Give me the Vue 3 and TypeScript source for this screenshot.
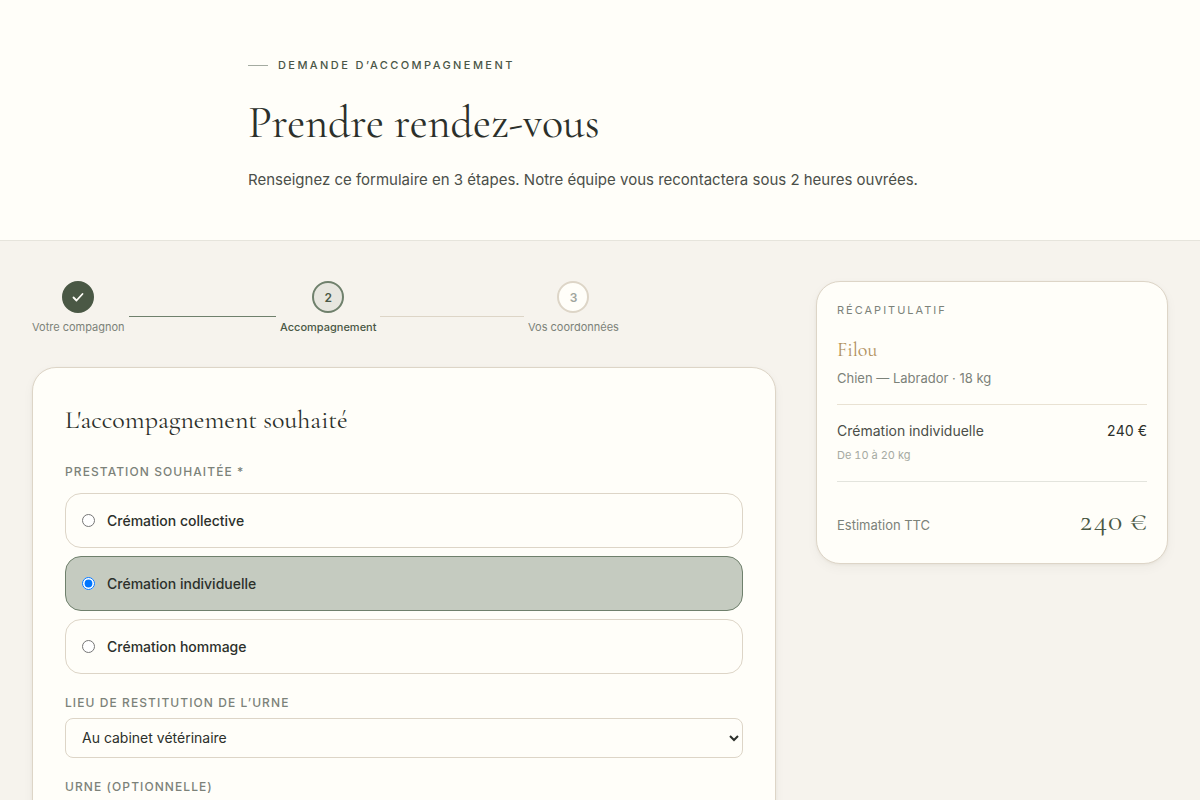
<script setup lang="ts">
import { ref, computed } from 'vue'

interface Step { id: number; label: string }
interface Service { id: string; label: string; price: number }

const steps: Step[] = [
  { id: 1, label: 'Votre compagnon' },
  { id: 2, label: 'Accompagnement' },
  { id: 3, label: 'Vos coordonnées' },
]
const currentStep = ref(2)

const services: Service[] = [
  { id: 'collective', label: 'Crémation collective', price: 120 },
  { id: 'individuelle', label: 'Crémation individuelle', price: 240 },
  { id: 'hommage', label: 'Crémation hommage', price: 340 },
]
const selected = ref('individuelle')
const service = computed(() => services.find((s) => s.id === selected.value) ?? services[1])

const place = ref('cabinet')
const urn = ref('')

function stepState(id: number): string {
  if (id < currentStep.value) return 'done'
  return id === currentStep.value ? 'active' : 'todo'
}
</script>

<template>
  <div class="page">
    <header class="hero">
      <div class="hero-inner">
        <p class="eyebrow">Demande d’accompagnement</p>
        <h1>Prendre rendez-vous</h1>
        <p class="lead">Renseignez ce formulaire en 3 étapes. Notre équipe vous recontactera sous 2 heures ouvrées.</p>
      </div>
    </header>

    <main class="layout">
      <div class="main-col">
        <ol class="steps">
          <li v-for="s in steps" :key="s.id" :class="['step-item', stepState(s.id)]">
            <div class="step">
              <span class="dot">
                <svg v-if="s.id < currentStep" width="14" height="14" viewBox="0 0 14 14" fill="none" aria-hidden="true">
                  <path d="M2.5 7.5L5.5 10.5L11.5 4" stroke="currentColor" stroke-width="1.8" stroke-linecap="round" stroke-linejoin="round" />
                </svg>
                <template v-else>{{ s.id }}</template>
              </span>
              <span class="step-label">{{ s.label }}</span>
            </div>
            <span v-if="s.id < steps.length" class="line"></span>
          </li>
        </ol>

        <form class="card" @submit.prevent>
          <h2>L'accompagnement souhaité</h2>

          <fieldset class="field">
            <legend class="label">Prestation souhaitée *</legend>
            <div class="options">
              <label v-for="s in services" :key="s.id" :class="['option', { checked: selected === s.id }]">
                <input v-model="selected" type="radio" name="service" :value="s.id" />
                <span>{{ s.label }}</span>
              </label>
            </div>
          </fieldset>

          <div class="field">
            <label class="label" for="place">Lieu de restitution de l’urne</label>
            <select id="place" v-model="place">
              <option value="cabinet">Au cabinet vétérinaire</option>
              <option value="domicile">À domicile</option>
            </select>
          </div>

          <div class="field">
            <label class="label" for="urn">Urne (optionnelle)</label>
            <select id="urn" v-model="urn">
              <option value="">Sans urne</option>
            </select>
          </div>
        </form>
      </div>

      <aside class="summary">
        <p class="summary-title">Récapitulatif</p>
        <p class="pet-name">Filou</p>
        <p class="pet-info">Chien — Labrador · 18 kg</p>
        <div class="block">
          <div class="row">
            <span>{{ service.label }}</span>
            <span class="price">{{ service.price }} €</span>
          </div>
          <p class="note">De 10 à 20 kg</p>
        </div>
        <div class="total">
          <span>Estimation TTC</span>
          <strong>{{ service.price }} €</strong>
        </div>
      </aside>
    </main>
  </div>
</template>

<style>
body {
  margin: 0;
  background: #f6f3ed;
}
</style>

<style scoped>
.page {
  min-height: 100vh;
  background: #f6f3ed;
  color: #2c302b;
  font-family: Inter, "Liberation Sans", sans-serif;
}
.page * {
  box-sizing: border-box;
}
h1, h2, p, ol {
  margin: 0;
  padding: 0;
}
h1, h2, .pet-name, .total strong {
  font-family: "Cormorant Garamond", Cormorant, "EB Garamond", "Liberation Serif", serif;
  font-weight: 400;
}
.hero {
  background: #fffef9;
  border-bottom: 1px solid #e6e4dc;
  padding: 56px 0 48px;
}
.hero-inner {
  max-width: 768px;
  margin: 0 auto;
  padding: 0 32px;
}
.eyebrow {
  display: flex;
  align-items: center;
  gap: 10px;
  font-size: 11px;
  line-height: 18px;
  font-weight: 500;
  letter-spacing: 0.22em;
  text-transform: uppercase;
  color: #4a5647;
}
.eyebrow::before {
  content: "";
  width: 20px;
  height: 1px;
  background: #a4aba1;
}
h1 {
  margin-top: 20px;
  font-size: 44px;
  line-height: 58px;
}
.lead {
  margin-top: 16px;
  font-size: 15px;
  line-height: 24px;
  color: #4b4f49;
}
.layout {
  display: grid;
  grid-template-columns: minmax(0, 1fr) 352px;
  gap: 40px;
  align-items: start;
  max-width: 1200px;
  margin: 0 auto;
  padding: 40px 32px;
  box-sizing: border-box;
}
.steps {
  display: flex;
  list-style: none;
  margin-bottom: 32px;
}
.step-item {
  flex: 1;
  display: flex;
  align-items: center;
}
.step {
  display: flex;
  flex-direction: column;
  align-items: center;
  gap: 6px;
}
.dot {
  display: flex;
  align-items: center;
  justify-content: center;
  width: 32px;
  height: 32px;
  border: 2px solid #ddd5c7;
  border-radius: 50%;
  background: #fffef9;
  color: #a0a59d;
  font-size: 12px;
  font-weight: 600;
}
.done .dot {
  background: #4a5845;
  border-color: #4a5845;
  color: #fffef9;
}
.active .dot {
  background: #e7e6df;
  border-color: #6f806c;
  color: #4a5845;
}
.step-label {
  font-size: 11px;
  line-height: 16px;
  color: #7c8279;
  white-space: nowrap;
}
.active .step-label {
  font-weight: 500;
  color: #4a5845;
}
.line {
  flex: 1;
  height: 1px;
  margin: 16px 4px 0;
  background: #ddd5c7;
}
.done .line {
  background: #6f806c;
}
.card, .summary {
  background: #fffef9;
  border: 1px solid #ddd5c7;
  border-radius: 24px;
  box-shadow: 0 1px 3px rgba(60, 50, 30, 0.06), 0 4px 12px rgba(60, 50, 30, 0.04);
}
.card {
  padding: 32px;
}
h2 {
  font-size: 26px;
  line-height: 40px;
  margin-bottom: 23px;
}
.field {
  border: 0;
  margin: 0 0 20px;
  padding: 0;
  min-width: 0;
}
.label {
  display: block;
  padding: 0;
  margin-bottom: 6px;
  font-size: 12px;
  line-height: 18px;
  font-weight: 500;
  letter-spacing: 0.09em;
  text-transform: uppercase;
  color: #7c8279;
}
legend.label {
  margin-bottom: 12px;
}
.options {
  display: grid;
  gap: 8px;
}
.option {
  display: flex;
  align-items: center;
  gap: 12px;
  padding: 16px;
  border: 1px solid #ddd5c7;
  border-radius: 16px;
  font-size: 14px;
  line-height: 21px;
  font-weight: 500;
  cursor: pointer;
}
.option.checked {
  background: #c5cbc0;
  border-color: #6f806c;
}
.option input {
  width: 13px;
  height: 13px;
  margin: 0;
}
select {
  display: block;
  width: 100%;
  height: 40px;
  padding: 0 12px 2px;
  border: 1px solid #ddd5c7;
  border-radius: 8px;
  background: #fffef9;
  color: #2c302b;
  font-family: inherit;
  font-size: 14px;
}
.summary {
  padding: 20px;
}
.summary-title {
  font-size: 11px;
  line-height: 16px;
  letter-spacing: 2px;
  text-transform: uppercase;
  color: #7c8279;
}
.pet-name {
  margin-top: 14px;
  font-size: 20px;
  line-height: 36px;
  color: #b0905c;
}
.pet-info {
  font-size: 13px;
  line-height: 20px;
  color: #7c8279;
}
.block, .total {
  font-variant-numeric: tabular-nums;
}
.block {
  margin-top: 16px;
  padding: 16px 0;
  border-top: 1px solid #e9e2d3;
  border-bottom: 1px solid #e3e4dd;
}
.row {
  display: flex;
  justify-content: space-between;
  font-size: 14px;
  line-height: 20px;
  color: #4b4f49;
}
.price {
  color: #2c302b;
}
.note {
  margin-top: 4px;
  font-size: 11px;
  line-height: 20px;
  color: #a6aaa2;
}
.total {
  display: flex;
  justify-content: space-between;
  align-items: baseline;
  padding-top: 16px;
  font-size: 13px;
  color: #7c8279;
}
.total strong {
  font-size: 30px;
  line-height: 45px;
  color: #4a5845;
}
</style>
